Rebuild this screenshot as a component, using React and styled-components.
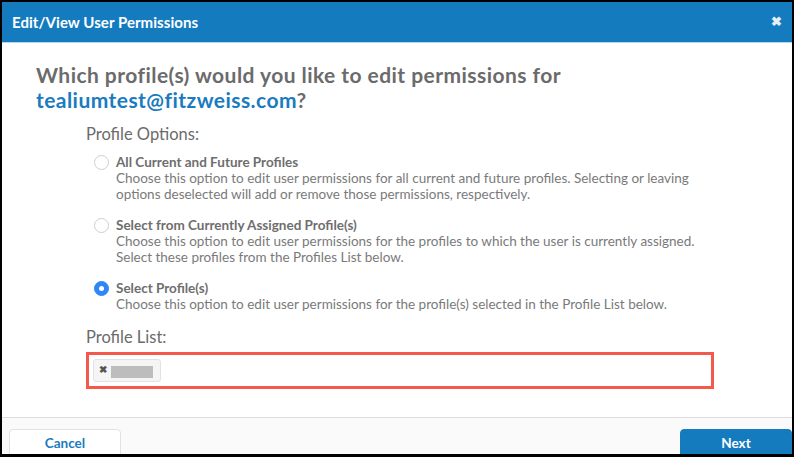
import React from "react";
import styled, { createGlobalStyle } from "styled-components";

const Global = createGlobalStyle`
  html, body { margin: 0; padding: 0; background: #000; }
  body { font-family: Lato, "Open Sans", sans-serif; }
  * { box-sizing: border-box; }
`;

const Frame = styled.div`
  width: 794px;
  height: 457px;
  padding: 2px 2px 3px 2px;
  background: #000;
`;

const Modal = styled.div`
  width: 100%;
  height: 100%;
  background: #fff;
  display: flex;
  flex-direction: column;
  overflow: hidden;
`;

const Header = styled.div`
  height: 41px;
  flex: none;
  background: #157bbf;
  border-bottom: 1px solid #b3d8f0;
  display: flex;
  align-items: center;
  justify-content: space-between;
  padding: 0 10px 0 10px;
  color: #fff;
`;

const HeaderTitle = styled.div`
  font-size: 15px;
  font-weight: 700;
  letter-spacing: 0.05px;
`;

const Close = styled.div`
  font-size: 13px;
  font-weight: 900;
  color: #e6eef5;
  line-height: 1;
  margin-top: -1px;
`;

const Body = styled.div`
  flex: 1;
  padding: 19px 34px 0 34px;
`;

const Question = styled.h2`
  margin: 0;
  font-size: 21px;
  font-weight: 700;
  line-height: 25px;
  letter-spacing: 0.45px;
  color: #6b6b6b;
`;

const Email = styled.span`
  color: #1a7bbf;
`;

const Section = styled.div`
  padding-left: 50px;
  padding-right: 44px;
`;

const SectionLabel = styled.div`
  font-size: 16.5px;
  color: #6b6b6b;
  line-height: 20px;
  margin-top: ${(p) => p.$top}px;
`;

const Options = styled.div`
  display: flex;
  flex-direction: column;
  gap: 15px;
  margin-top: 10px;
  padding-left: 8px;
`;

const Option = styled.label`
  display: flex;
  gap: 7px;
  align-items: flex-start;
`;

const Radio = styled.span`
  flex: none;
  width: 15px;
  height: 15px;
  border-radius: 50%;
  margin-top: 1px;
  border: 1px solid ${(p) => (p.$checked ? "#2f86f6" : "#cfcfcf")};
  background: ${(p) => (p.$checked ? "#2f86f6" : "#fff")};
  display: flex;
  align-items: center;
  justify-content: center;
  &::after {
    content: "";
    width: 5px;
    height: 5px;
    border-radius: 50%;
    background: #fff;
    display: ${(p) => (p.$checked ? "block" : "none")};
  }
`;

const OptionText = styled.div`
  display: flex;
  flex-direction: column;
  font-size: 13.5px;
  line-height: 16px;
  color: #7a7a7a;
`;

const OptionTitle = styled.span`
  font-weight: 700;
  color: #6e6e6e;
`;

const ListBox = styled.div`
  margin-top: 5px;
  height: 37px;
  border: 3px solid #f5594e;
  padding: 5px 4px;
  display: flex;
  align-items: center;
`;

const Tag = styled.div`
  height: 23px;
  width: 68px;
  border: 1px solid #dde3ea;
  border-radius: 3px;
  background: #f5f5f5;
  display: flex;
  align-items: center;
  padding: 0 6px 0 5px;
  gap: 4px;
`;

const TagX = styled.span`
  font-size: 10px;
  font-weight: 900;
  color: #555;
  line-height: 1;
  margin-top: -3px;
`;

const Redacted = styled.span`
  width: 42px;
  height: 12px;
  background: #bdbdbd;
  margin-top: 3px;
`;

const Footer = styled.div`
  flex: none;
  height: 37px;
  border-top: 1px solid #dedede;
  background: #fafafa;
  display: flex;
  justify-content: space-between;
  padding: 11px 0 0 7px;
`;

const Button = styled.button`
  width: 112px;
  height: 36px;
  border-radius: 4px;
  font-family: Lato, "Open Sans", sans-serif;
  font-size: 13.5px;
  font-weight: 700;
  padding: 0 0 8px 0;
  border: 1px solid ${(p) => (p.$primary ? "#157bbf" : "#e2e2e2")};
  background: ${(p) => (p.$primary ? "#157bbf" : "#fff")};
  color: ${(p) => (p.$primary ? "#fff" : "#1a7bbf")};
`;

const options = [
  {
    title: "All Current and Future Profiles",
    lines: [
      "Choose this option to edit user permissions for all current and future profiles. Selecting or leaving",
      "options deselected will add or remove those permissions, respectively.",
    ],
  },
  {
    title: "Select from Currently Assigned Profile(s)",
    lines: [
      "Choose this option to edit user permissions for the profiles to which the user is currently assigned.",
      "Select these profiles from the Profiles List below.",
    ],
  },
  {
    title: "Select Profile(s)",
    checked: true,
    lines: [
      "Choose this option to edit user permissions for the profile(s) selected in the Profile List below.",
    ],
  },
];

export default function App() {
  return (
    <>
      <Global />
      <Frame>
        <Modal>
          <Header>
            <HeaderTitle>Edit/View User Permissions</HeaderTitle>
            <Close>✖</Close>
          </Header>
          <Body>
            <Question>
              Which profile(s) would you like to edit permissions for
              <br />
              <Email>tealiumtest@fitzweiss.com</Email>?
            </Question>
            <Section>
              <SectionLabel $top={12}>Profile Options:</SectionLabel>
              <Options>
                {options.map((o) => (
                  <Option key={o.title}>
                    <Radio $checked={o.checked} />
                    <OptionText>
                      <OptionTitle>{o.title}</OptionTitle>
                      {o.lines.map((l) => (
                        <span key={l}>{l}</span>
                      ))}
                    </OptionText>
                  </Option>
                ))}
              </Options>
              <SectionLabel $top={15}>Profile List:</SectionLabel>
              <ListBox>
                <Tag>
                  <TagX>✖</TagX>
                  <Redacted />
                </Tag>
              </ListBox>
            </Section>
          </Body>
          <Footer>
            <Button>Cancel</Button>
            <Button $primary>Next</Button>
          </Footer>
        </Modal>
      </Frame>
    </>
  );
}
